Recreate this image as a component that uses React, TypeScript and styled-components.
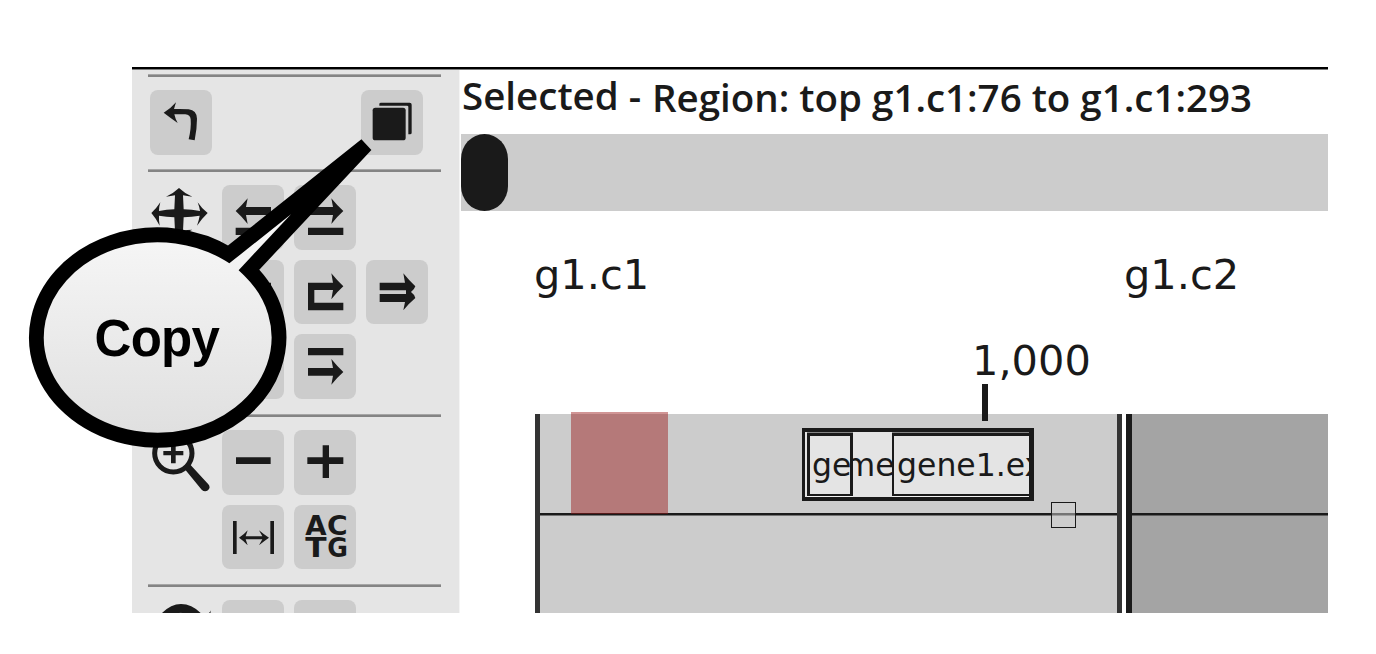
import React from 'react';
import styled, { createGlobalStyle } from 'styled-components';

const INK = '#1a1a1a';

const GlobalStyle = createGlobalStyle`
  * { box-sizing: border-box; }
  body { margin: 0; background: #fff; color: ${INK}; overflow: hidden; }
`;

const Page = styled.div`
  position: relative;
  width: 1376px;
  height: 654px;
  padding: 67px 48px 41px 132px;
`;

const AppWindow = styled.div`
  display: flex;
  flex-direction: column;
  height: 546px;
  overflow: hidden;
`;

const TopEdge = styled.div`
  flex: none;
  height: 3px;
  background: #000;
  border-bottom: 1px solid #7d7d7d;
`;

const Columns = styled.div`
  display: flex;
  flex: 1;
  min-height: 0;
`;

const Sidebar = styled.aside`
  flex: none;
  width: 328px;
  padding: 4px 0 0 16px;
  background: #e5e5e5;
  border-right: 1px solid #f4f4f4;
`;

const ToolGroup = styled.div<{ $height: number }>`
  width: 293px;
  height: ${p => p.$height}px;
  padding-left: 2px;
  border-top: 1px solid #a6a6a6;

  &::before {
    content: '';
    display: block;
    height: 2px;
    margin: 0 0 13px -2px;
    background: #848484;
  }
`;

const ToolRow = styled.div<{ $spread?: boolean }>`
  display: flex;
  gap: 10px;
  height: 64px;
  width: ${p => (p.$spread ? '273px' : 'auto')};
  justify-content: ${p => (p.$spread ? 'space-between' : 'flex-start')};
  margin-bottom: 10.6px;
`;

const Tile = styled.div`
  flex: none;
  width: 62px;
  height: 64.5px;
`;

const ToolButton = styled(Tile).attrs({ as: 'button' })`
  display: block;
  padding: 0;
  border: 0;
  border-radius: 8px;
  background: #ccc;
`;

const IconSvg = styled.svg`
  display: block;
  width: 62px;
  height: 64px;
  overflow: visible;
  fill: ${INK};
`;

const Main = styled.main`
  flex: 1;
  min-width: 0;
  display: flex;
  flex-direction: column;
  padding-left: 1px;
`;

const Status = styled.div`
  display: flex;
  height: 64px;
  padding-left: 1px;
  font: 600 38.5px/52px 'Open Sans', sans-serif;
  white-space: pre;
`;

const StatusLabel = styled.span`
  width: 190px;
  line-height: 50px;
`;

const StatusValue = styled.span`
  padding-top: 1px;
`;

const Scrollbar = styled.div`
  height: 77px;
  background: #ccc;
`;

const ScrollHandle = styled.div`
  width: 47px;
  height: 77px;
  border-radius: 23.5px / 25px;
  background: ${INK};
`;

const Names = styled.div`
  display: flex;
  padding: 39px 0 0 73px;
  height: 115px;
  font: 41.5px/50px 'DejaVu Sans', sans-serif;
`;

const Name = styled.span`
  flex: none;
  width: 590px;
`;

const Ruler = styled.div`
  height: 88px;
  padding: 10px 0 0 511px;
  font: 41.5px/50px 'DejaVu Sans', sans-serif;
`;

const Tracks = styled.div`
  position: relative;
  display: flex;
  gap: 4px;
  height: 199px;
  padding-left: 74px;
`;

const Chromosome = styled.div<{ $dim?: boolean }>`
  flex: ${p => (p.$dim ? '1' : '0 0 587px')};
  padding-top: 99px;
  background: ${p => (p.$dim ? '#a4a4a4' : '#ccc')};
  border-left: ${p => (p.$dim ? `6px solid ${INK}` : '5px solid #333')};
  border-right: ${p => (p.$dim ? '0' : '5px solid #333')};
`;

const Strand = styled.div<{ $dim?: boolean }>`
  height: 3px;
  background: ${INK};
  border-bottom: 1px solid ${p => (p.$dim ? '#5f5f5f' : '#737373')};
`;

const Feature = styled.div`
  position: absolute;
`;

const Selection = styled(Feature)`
  left: 109.5px;
  top: -2.5px;
  width: 97.5px;
  height: 102.5px;
  background: rgba(155, 25, 25, 0.46);
`;

const Tick = styled(Feature)`
  left: 521px;
  top: -30px;
  width: 6px;
  height: 37px;
  background: ${INK};
`;

const Gene = styled(Feature)`
  left: 341px;
  top: 14px;
  width: 232px;
  height: 73px;
  overflow: hidden;
  border: solid ${INK};
  border-width: 4px 5px 4px 3px;
  background: #e4e4e4;
  font: 31.5px/36px 'DejaVu Sans', sans-serif;
`;

const Messenger = styled(Feature)`
  left: 39.5px;
  top: 15px;
`;

const Exon = styled(Feature)<{ $left: number; $width: number; $thin?: boolean }>`
  left: ${p => p.$left}px;
  top: 1px;
  width: ${p => p.$width}px;
  height: 63px;
  padding: 11px 0 0 ${p => (p.$thin ? 3 : 2)}px;
  overflow: hidden;
  white-space: nowrap;
  border: solid ${INK};
  border-width: 3px 3px 2px ${p => (p.$thin ? 2 : 3)}px;
  background: #e4e4e4;
  box-shadow: 0 -1px 0 #858585, 0 2px 0 #f4f4f4;
`;

const Marker = styled(Feature)`
  left: 590px;
  top: 88px;
  width: 25px;
  height: 26px;
  border: 1px solid ${INK};
  background: rgba(208, 208, 208, 0.5);
`;

const Callout = styled.div`
  position: absolute;
  left: 0;
  top: 0;
  width: 400px;
  height: 460px;
`;

const CalloutShape = styled.svg`
  display: block;
`;

const CalloutText = styled.div`
  position: absolute;
  left: 94.5px;
  top: 309px;
  color: #000;
  font: bold 51px/60px 'Liberation Sans', Arial, sans-serif;
  letter-spacing: -0.7px;
`;

const Letters = styled.text`
  font: bold 77px 'DejaVu Sans', sans-serif;
`;

const Icon = ({ children, flip }: { children: React.ReactNode; flip?: boolean }) => (
  <IconSvg viewBox="0 0 186 192">
    {flip ? <g transform="translate(189 0) scale(-1 1)">{children}</g> : children}
  </IconSvg>
);

const ArrowOverBar = ({ flip }: { flip?: boolean }) => (
  <Icon flip={flip}>
    <path d="M42 66H117L112 40Q129 61 148 78Q129 95 112 117L117 90H42ZM42 128H148V150H42Z" />
  </Icon>
);

const HookArrow = ({ flip }: { flip?: boolean }) => (
  <Icon flip={flip}>
    <path d="M42 68H117L112 40Q129 61 148 79Q129 96 112 118L117 90H61V128H148V151H42Z" />
  </Icon>
);

const BarOverArrow = ({ flip }: { flip?: boolean }) => (
  <Icon flip={flip}>
    <path d="M42 42H148V64H42ZM42 102H117L112 75Q129 96 148 114Q129 131 112 152L117 125H42Z" />
  </Icon>
);

export default function App() {
  return (
    <>
      <GlobalStyle />
      <Page>
        <AppWindow>
          <TopEdge />
          <Columns>
            <Sidebar>
              <ToolGroup $height={95}>
                <ToolRow $spread>
                  <ToolButton aria-label="Undo">
                    <Icon>
                      <path d="M41 68Q62 56 78 37L72 57Q98 56 116 58Q140 61 141 86Q141 115 134 151L116 148Q124 115 122 88Q121 74 106 73L73 73Q76 87 83 99Q62 84 41 68Z" />
                    </Icon>
                  </ToolButton>
                  <ToolButton aria-label="Copy">
                    <Icon>
                      <rect x="35" y="53" width="99" height="98" rx="8" />
                      <path d="M55 47V42Q55 38 60 38H146Q152 38 152 44V128Q152 133 147 133H142V50Q142 47 138 47Z" />
                    </Icon>
                  </ToolButton>
                </ToolRow>
              </ToolGroup>
              <ToolGroup $height={245}>
                <ToolRow>
                  <Tile>
                    <Icon>
                      <path d="M87 9Q106 27 127 35Q112 33 99 31L101 73Q125 74 150 78Q148 65 143 52Q156 72 173 84Q156 100 141 122Q147 105 149 92Q125 96 101 97L99 138Q112 134 127 134Q106 142 87 160Q68 142 48 134Q62 134 75 138L73 97Q50 96 27 92Q26 105 29 122Q18 100 4 84Q18 72 31 52Q27 65 27 78Q50 74 73 73L75 31Q62 33 48 35Q68 27 87 9Z" />
                    </Icon>
                  </Tile>
                  <ToolButton aria-label="Move start left">
                    <ArrowOverBar flip />
                  </ToolButton>
                  <ToolButton aria-label="Move start right">
                    <ArrowOverBar />
                  </ToolButton>
                </ToolRow>
                <ToolRow>
                  <Tile />
                  <ToolButton aria-label="Move around left">
                    <HookArrow flip />
                  </ToolButton>
                  <ToolButton aria-label="Move around right">
                    <HookArrow />
                  </ToolButton>
                  <ToolButton aria-label="Move both right">
                    <Icon>
                      <path d="M41 68H117L112 40Q129 61 148 79Q145 89 135 96Q145 103 148 114Q129 130 112 151L117 126H41V102H120V91H41Z" />
                    </Icon>
                  </ToolButton>
                </ToolRow>
                <ToolRow>
                  <Tile />
                  <ToolButton aria-label="Move end left">
                    <BarOverArrow flip />
                  </ToolButton>
                  <ToolButton aria-label="Move end right">
                    <BarOverArrow />
                  </ToolButton>
                </ToolRow>
              </ToolGroup>
              <ToolGroup $height={170}>
                <ToolRow>
                  <Tile>
                    <Icon>
                      <circle cx="70" cy="70" r="56" fill="none" stroke={INK} strokeWidth="15" />
                      <path d="M40 63H63V40H77V63H100V76H77V100H63V76H40ZM104 117Q114 113 119 102L175 163Q183 173 174 181Q164 188 155 179Z" />
                    </Icon>
                  </Tile>
                  <ToolButton aria-label="Zoom out">
                    <Icon>
                      <path d="M42 82H146V102H42Z" />
                    </Icon>
                  </ToolButton>
                  <ToolButton aria-label="Zoom in">
                    <Icon>
                      <path d="M40 82H86V46H105V82H148V102H105V144H86V102H40Z" />
                    </Icon>
                  </ToolButton>
                </ToolRow>
                <ToolRow>
                  <Tile />
                  <ToolButton aria-label="Fit width">
                    <Icon>
                      <path d="M33 48H44V147H33ZM145 48H156V147H145ZM51 98Q66 89 77 76L71 94H121L111 76Q126 89 141 98Q126 108 111 121L121 103H71L77 121Q66 108 51 98Z" />
                    </Icon>
                  </ToolButton>
                  <ToolButton aria-label="Zoom to bases">
                    <Icon>
                      <Letters x="34" y="91" textLength="64" lengthAdjust="spacingAndGlyphs">A</Letters>
                      <Letters x="99" y="91" textLength="62" lengthAdjust="spacingAndGlyphs">C</Letters>
                      <Letters x="34" y="156" textLength="64" lengthAdjust="spacingAndGlyphs">T</Letters>
                      <Letters x="100" y="156" textLength="62" lengthAdjust="spacingAndGlyphs">G</Letters>
                    </Icon>
                  </ToolButton>
                </ToolRow>
              </ToolGroup>
              <ToolGroup $height={80}>
                <ToolRow>
                  <Tile>
                    <Icon>
                      <path d="M34 41Q62 12 93 12Q126 12 154 41V60H34ZM174 41Q182 36 183 31L181 41Z" />
                      <ellipse cx="92" cy="41" rx="7" ry="3" fill="#777" />
                    </Icon>
                  </Tile>
                  <ToolButton aria-label="Show" />
                  <ToolButton aria-label="Hide" />
                </ToolRow>
              </ToolGroup>
            </Sidebar>
            <Main>
              <Status>
                <StatusLabel>Selected - </StatusLabel>
                <StatusValue>Region: top g1.c1:76 to g1.c1:293</StatusValue>
              </Status>
              <Scrollbar>
                <ScrollHandle />
              </Scrollbar>
              <Names>
                <Name>g1.c1</Name>
                <Name>g1.c2</Name>
              </Names>
              <Ruler>1,000</Ruler>
              <Tracks>
                <Chromosome>
                  <Strand />
                </Chromosome>
                <Chromosome $dim>
                  <Strand $dim />
                </Chromosome>
                <Selection />
                <Tick />
                <Gene>
                  <Messenger>me</Messenger>
                  <Exon $left={2} $width={46}>ge</Exon>
                  <Exon $left={87} $width={145} $thin>gene1.ex</Exon>
                </Gene>
                <Marker />
              </Tracks>
            </Main>
          </Columns>
        </AppWindow>
        <Callout>
          <CalloutShape width="400" height="460" viewBox="0 0 400 460">
            <defs>
              <linearGradient id="bubble" gradientUnits="userSpaceOnUse" x1="0" y1="235" x2="0" y2="440">
                <stop offset="0" stopColor="#f6f6f6" />
                <stop offset="1" stopColor="#dfdfdf" />
              </linearGradient>
            </defs>
            <path
              d="M228.8 254.3L366 145L249 269.9A121.3 102.7 0 1 1 228.8 254.3Z"
              fill="url(#bubble)"
              stroke="#000"
              strokeWidth="14.8"
            />
          </CalloutShape>
          <CalloutText>Copy</CalloutText>
        </Callout>
      </Page>
    </>
  );
}
